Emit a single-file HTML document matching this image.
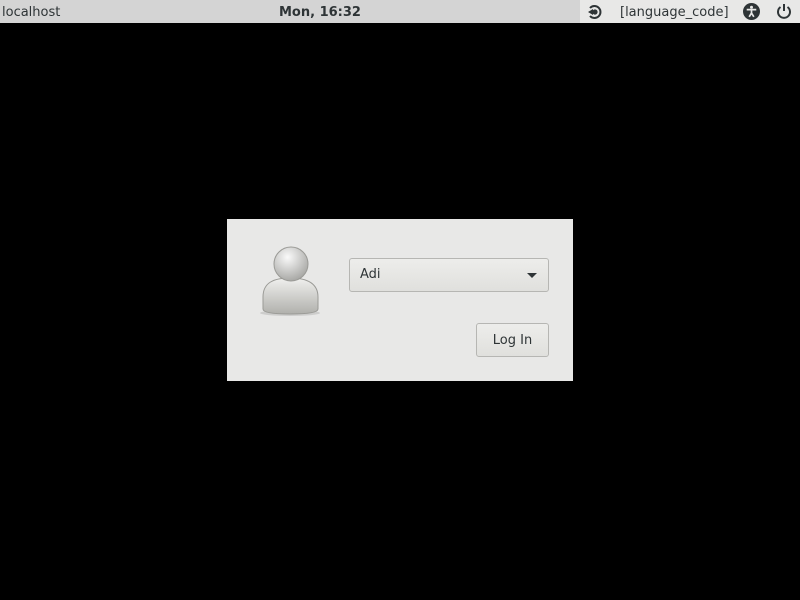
<!DOCTYPE html>
<html><head><style>
body{margin:0;width:800px;height:600px;background:#000;position:relative;overflow:hidden;font-family:"DejaVu Sans","Liberation Sans",sans-serif;}
.bar{position:absolute;left:0;top:0;width:800px;height:23px;background:#d4d4d4;}
.bar .r{position:absolute;left:580px;top:0;width:220px;height:23px;background:#e8e8e7;}
.t{position:absolute;top:5px;font-size:13px;color:#2e3436;}
.dlg{position:absolute;left:227px;top:219px;width:346px;height:162px;background:#e8e8e7;}
.combo{position:absolute;left:122px;top:39px;width:198px;height:32px;border:1px solid #b6b6b3;border-radius:3px;background:linear-gradient(#ededeb,#e0e0dd);font-size:13px;color:#2e3436;}
.btn{position:absolute;left:249px;top:104px;width:71px;height:32px;border:1px solid #b6b6b3;border-radius:3px;background:linear-gradient(#ededeb,#e0e0dd);font-size:13px;color:#2e3436;text-align:center;line-height:34px;}
</style></head><body>
<div class="bar"><div class="r"></div>
<div class="t" style="left:2px">localhost</div>
<div class="t" style="left:279px;font-weight:bold">Mon, 16:32</div>
<svg style="position:absolute;left:587px;top:4px" width="16" height="16" viewBox="0 0 16 16"><path d="M3 4A6 6 0 1 1 3 12" fill="none" stroke="#2e3436" stroke-width="2"/><circle cx="8" cy="8" r="2.6" fill="#2e3436"/><path d="M1 8L6 5v6z" fill="#2e3436"/></svg>
<div class="t" style="left:620px">[language_code]</div>
<svg style="position:absolute;left:743px;top:3px" width="17" height="17" viewBox="0 0 16 16"><circle cx="8" cy="8" r="8" fill="#2e3436"/><circle cx="8" cy="4" r="1.4" fill="#e8e8e7"/><path d="M3.5 6.2L12.5 6.2M8 6.2V9.5L5.8 13M8 9.5L10.2 13" stroke="#e8e8e7" stroke-width="1.6" fill="none"/></svg>
<svg style="position:absolute;left:776px;top:3px" width="16" height="16" viewBox="0 0 16 16"><path d="M4.5 4A6 6 0 1 0 11.5 4" fill="none" stroke="#2e3436" stroke-width="2"/><path d="M8 1V8" stroke="#2e3436" stroke-width="2"/></svg>
</div>
<div class="dlg">
<svg style="position:absolute;left:32px;top:26px" width="64" height="72" viewBox="0 0 64 72">
<defs><radialGradient id="h" cx="0.4" cy="0.3" r="0.7"><stop offset="0" stop-color="#fafafa"/><stop offset="1" stop-color="#a9a9a6"/></radialGradient>
<linearGradient id="b" x1="0" y1="0" x2="0" y2="1"><stop offset="0" stop-color="#f0f0ee"/><stop offset="1" stop-color="#b0b0ac"/></linearGradient></defs>
<ellipse cx="31" cy="68" rx="30" ry="3" fill="#bbb" opacity=".6"/>
<path d="M4 52C4 38 14 33 31 33C48 33 59 38 59 52V64Q59 69 31 69Q4 69 4 64Z" fill="url(#b)" stroke="#9a9a96"/>
<circle cx="32" cy="19" r="17" fill="url(#h)" stroke="#9a9a96"/>
</svg>
<div class="combo"><span style="position:absolute;left:10px;top:8px">Adi</span><svg style="position:absolute;left:176px;top:13px" width="12" height="7"><path d="M1 1h10L6 6z" fill="#2e3436"/></svg></div>
<div class="btn">Log In</div>
</div>
</body></html>
